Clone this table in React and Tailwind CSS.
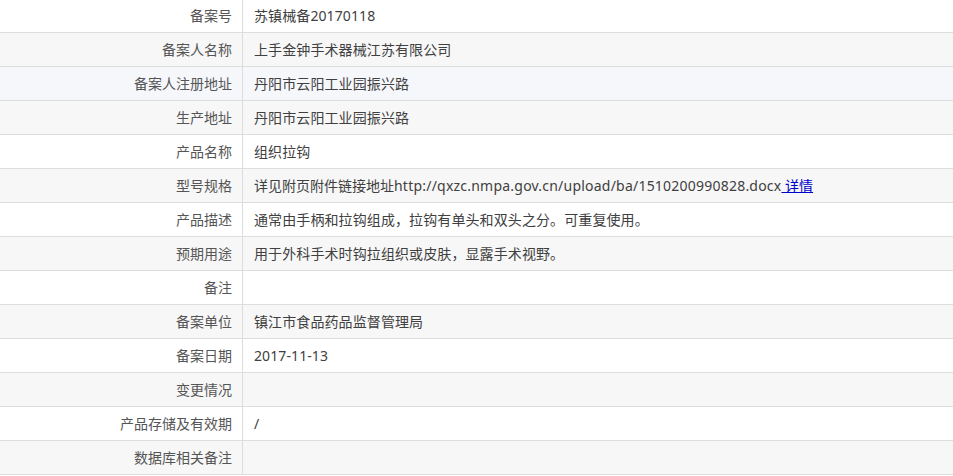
const rows = [
  ['备案号', '苏镇械备20170118'],
  ['备案人名称', '上手金钟手术器械江苏有限公司'],
  ['备案人注册地址', '丹阳市云阳工业园振兴路'],
  ['生产地址', '丹阳市云阳工业园振兴路'],
  ['产品名称', '组织拉钩'],
  ['型号规格', 'link'],
  ['产品描述', '通常由手柄和拉钩组成，拉钩有单头和双头之分。可重复使用。'],
  ['预期用途', '用于外科手术时钩拉组织或皮肤，显露手术视野。'],
  ['备注', ''],
  ['备案单位', '镇江市食品药品监督管理局'],
  ['备案日期', '2017-11-13'],
  ['变更情况', ''],
  ['产品存储及有效期', '/'],
  ['数据库相关备注', ''],
];

function rowBg(i) {
  if (i === 2) return 'bg-[#f5f7fb]';
  return i % 2 === 1 ? 'bg-[#f7f7f7]' : 'bg-white';
}

export default function App() {
  return (
    <div
      className="w-[953px] h-[476px] overflow-hidden bg-white text-[14px] text-[#404040]"
      style={{ fontFamily: '"Noto Sans", "Noto Sans CJK SC", sans-serif' }}
    >
      <div className="-mt-[2px]">
        {rows.map(([label, value], i) => (
          <div key={label} className={`flex h-[34px] border-t border-[#dddddd] ${rowBg(i)}`}>
            <div className="w-[243px] shrink-0 border-r border-[#dddddd] flex items-center justify-end pr-[10px] text-[#555]">
              {label}
            </div>
            <div className="flex-1 flex items-center pl-[11px]">
              {value === 'link' ? (
                <span>
                  详见附页附件链接地址
                  <span className="tracking-[0.22px]">http://qxzc.nmpa.gov.cn/upload/ba/1510200990828.docx</span>
                  <a href="#" className="text-[#0000cc] underline">&nbsp;详情</a>
                </span>
              ) : (
                <span className="tracking-[0.1px]">{value}</span>
              )}
            </div>
          </div>
        ))}
        <div className="h-px bg-[#dddddd]" />
      </div>
    </div>
  );
}
